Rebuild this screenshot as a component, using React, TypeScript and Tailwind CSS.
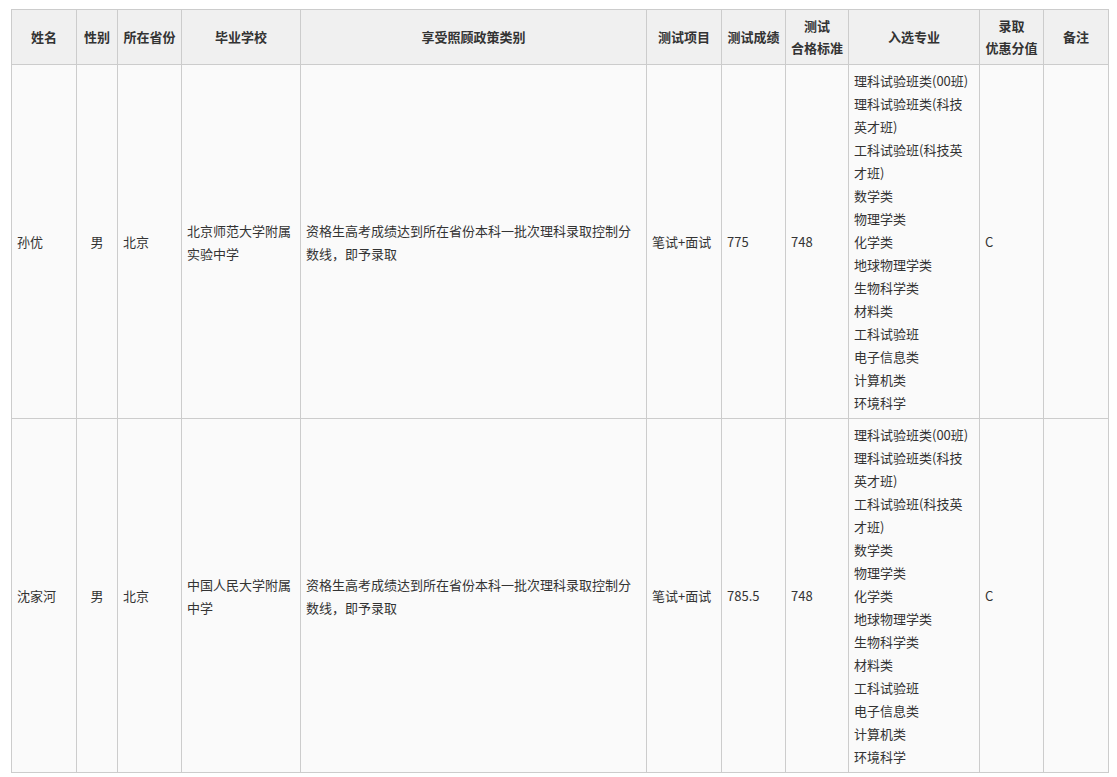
const cols = [65, 41, 64, 119, 346, 75, 64, 63, 131, 64, 65];
const heads = ['姓名', '性别', '所在省份', '毕业学校', '享受照顾政策类别', '测试项目', '测试成绩', '测试\n合格标准', '入选专业', '录取\n优惠分值', '备注'];
const majors = ['理科试验班类(00班)', '理科试验班类(科技\n英才班)', '工科试验班(科技英\n才班)', '数学类', '物理学类', '化学类', '地球物理学类', '生物科学类', '材料类', '工科试验班', '电子信息类', '计算机类', '环境科学'];
const rows = [
  ['孙优', '男', '北京', '北京师范大学附属\n实验中学', '资格生高考成绩达到所在省份本科一批次理科录取控制分\n数线，即予录取', '笔试+面试', '775', '748'],
  ['沈家河', '男', '北京', '中国人民大学附属\n中学', '资格生高考成绩达到所在省份本科一批次理科录取控制分\n数线，即予录取', '笔试+面试', '785.5', '748'],
];

export default function App() {
  return (
    <div className="pl-[11px] pt-[9px] bg-white min-h-screen text-[13px] text-[#333]" style={{ fontFamily: '"Noto Sans CJK SC", "Liberation Sans", sans-serif' }}>
      <table className="border-collapse table-fixed" style={{ width: 1097 }}>
        <colgroup>{cols.map((w, i) => <col key={i} style={{ width: w }} />)}</colgroup>
        <thead>
          <tr className="bg-[#f0f0f0] h-[55px]">
            {heads.map((h, i) => (
              <th key={i} className="border border-[#ccc] font-bold text-center whitespace-pre-line leading-[22px] px-1">{h}</th>
            ))}
          </tr>
        </thead>
        <tbody>
          {rows.map((r, ri) => (
            <tr key={ri} className="bg-[#fafafa]">
              {r.map((c, ci) => (
                <td key={ci} className={`border border-[#ccc] whitespace-pre-line leading-[23px] align-middle ${ci === 1 ? 'text-center' : 'px-[5px]'}`}>{c}</td>
              ))}
              <td className="border border-[#ccc] px-[5px] py-[4px] leading-[23px] whitespace-pre-line">{majors.join('\n')}</td>
              <td className="border border-[#ccc] px-[5px] leading-[23px]">C</td>
              <td className="border border-[#ccc]"></td>
            </tr>
          ))}
        </tbody>
      </table>
    </div>
  );
}
